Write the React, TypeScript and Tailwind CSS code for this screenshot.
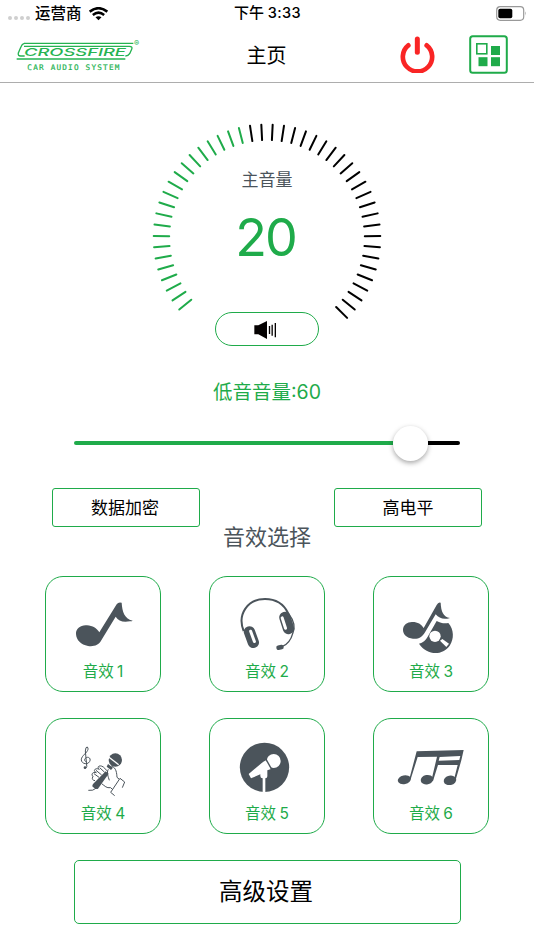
import type { ReactNode } from "react";

const GREEN = "#1fab4a";
const SLATE = "#4b545b";

// 48 steps over 270 degrees, the first step (zero) has no tick
const TICK_COUNT = 47;
const VOLUME_TICKS = 21;

type Effect = {
  label: string;
  icon: ReactNode;
};

function StatusBar() {
  return (
    <div className="grid h-[27px] grid-cols-3 items-center pl-2 pr-[7px] text-[14.5px] font-medium">
      <div className="flex items-center">
        <div className="mt-[9px] flex gap-[2px]">
          {[0, 1, 2, 3].map((dot) => (
            <span key={dot} className="h-1 w-1 rounded-full bg-[#cfcfcf]" />
          ))}
        </div>
        <span className="ml-[5px] text-[15.5px]">运营商</span>
        <svg className="ml-[7px] h-[14px] w-[19px]" viewBox="0 0 57 42" fill="none" stroke="#000" strokeWidth="7.500">
          <path d="M2 14 Q28.5 -7 55 14" />
          <path d="M11.500 24 Q28.500 10 45.500 24" />
          <path d="M19.500 31 Q28.500 24 37.500 31 L28.500 40 Z" fill="#000" stroke="none" />
        </svg>
      </div>
      <div className="whitespace-nowrap text-center">
        <span className="text-[15px]">下午</span> <span className="tracking-[0.4px]">3:33</span>
      </div>
      <div className="flex justify-end">
        <svg className="h-[15px] w-[31px]" viewBox="0 0 31 15">
          <rect x="0.700" y="0.700" width="27" height="13.600" rx="3.500" fill="none" stroke="#999" strokeWidth="1.200" />
          <rect x="2.300" y="2.700" width="14" height="9.600" rx="1.800" fill="#000" />
          <path d="M29.300 5.300 Q31 7.500 29.300 9.700 Z" fill="#999" />
        </svg>
      </div>
    </div>
  );
}

function Logo() {
  return (
    <svg className="h-[36px] w-[130px] overflow-visible" viewBox="0 0 390 108" fill="none" stroke="#25b351" strokeWidth="4">
      <path d="M24 19 H352" />
      <path d="M24 28 H340 Q351 28 347 37 L341 50 Q337 57 328 57" />
      <path d="M25 19 Q18 21 15 29 L7 48 Q5 57 14 57 H26 M2 66 H328" />
      <text x="24" y="56" fontSize="33" fontStyle="italic" fontWeight="500" textLength="306" lengthAdjust="spacingAndGlyphs" fill="#25b351" stroke="none" fontFamily="Inter, sans-serif">
        CROSSFIRE
      </text>
      <text x="34" y="99" fontSize="23" textLength="276" fill="#25b351" stroke="#25b351" strokeWidth="0.600" fontFamily="'DejaVu Sans Mono', monospace">
        CAR AUDIO SYSTEM
      </text>
      <text x="354" y="28" fontSize="23" fill="#25b351" stroke="none" fontFamily="Inter, sans-serif">
        ®
      </text>
    </svg>
  );
}

function Header() {
  return (
    <header className="grid h-[56px] grid-cols-[1fr_auto_1fr] items-center border-b border-[#adadad] pl-4 pr-[26px]">
      <Logo />
      <h1 className="pl-[9px] pt-[2px] text-[20px]">主页</h1>
      <div className="flex items-center justify-end gap-[34px]">
        <svg className="h-[37px] w-[35px]" viewBox="0 0 105 111" fill="none" stroke="#f92525" strokeLinecap="round">
          <path d="M25 28 A44 44 0 1 0 80 28" strokeWidth="14" />
          <path d="M52 9 V49" strokeWidth="15" />
        </svg>
        <svg className="h-[39px] w-[39px]" viewBox="0 0 39 39">
          <rect x="1.200" y="1.200" width="36.600" height="36.600" rx="2.500" fill="none" stroke={GREEN} strokeWidth="2" />
          <rect x="7.800" y="8.800" width="10" height="10" fill="none" stroke={GREEN} strokeWidth="1.600" />
          <rect x="22" y="11" width="9" height="9" fill={GREEN} />
          <rect x="9.500" y="22.200" width="9" height="9" fill={GREEN} />
          <rect x="22" y="22.200" width="9" height="9" fill={GREEN} />
        </svg>
      </div>
    </header>
  );
}

function VolumeDial() {
  const ticks = Array.from({ length: TICK_COUNT }, (_, i) => i + 1);

  return (
    <section className="mt-[37px] grid h-[229px] w-[230px] justify-items-center">
      <svg className="col-start-1 row-start-1 h-[229px] w-[230px]" viewBox="0 0 230 229">
        {ticks.map((tick) => (
          <line
            key={tick}
            x1="115"
            y1="4.500"
            x2="115"
            y2="20"
            stroke={tick <= VOLUME_TICKS ? GREEN : "#000"}
            strokeWidth="2"
            strokeLinecap="round"
            transform={`rotate(${-135 + (tick * 270) / TICK_COUNT} 115 117.8)`}
          />
        ))}
      </svg>
      <div className="col-start-1 row-start-1 flex flex-col items-center">
        <span className="mt-[48px] text-[17px] leading-6 text-[#4b545b]">主音量</span>
        <span className="mr-[3px] mt-[17px] text-[52px] leading-[58px] tracking-[-2px] text-[#1fab4a]">20</span>
        <button className="mt-[45px] flex h-[34px] w-[104px] items-center justify-center rounded-full border border-[#1fab4a]">
          <svg className="mr-1 mt-px h-[18px] w-[23px]" viewBox="0 0 69 54">
            <path d="M1 13 H13 L39 0 V54 L13 40 H1 Z" fill="#050202" />
            <path d="M46.500 15 V39 M54.500 11 V44 M64 6 V49" stroke="#050202" strokeWidth="4" />
          </svg>
        </button>
      </div>
    </section>
  );
}

function BassSlider() {
  return (
    <section className="flex w-full flex-col items-center">
      <p className="mt-[30px] text-[19.500px] leading-[26px] text-[#1fab4a]">低音音量:60</p>
      <div className="mt-[20px] flex h-9 w-[386px] items-center">
        <div className="h-1 w-[319px] rounded-l-full bg-[#1fab4a]" />
        <div className="h-[35px] w-[35px] shrink-0 rounded-full bg-white shadow-[0_2px_5px_rgba(0,0,0,0.35)]" />
        <div className="h-1 flex-1 rounded-r-full bg-black" />
      </div>
    </section>
  );
}

const effects: Effect[] = [
  {
    label: "音效 1",
    icon: (
      <path d="M120 201 C119 184 135 173 153 175 C170 176 182 184 190 196 L242 112 Q247 104 257 107 C259 133 264 154 290 161 Q289 163 282 163 C260 167 248 162 239 149 L196 220 C188 235 172 240 156 237 C135 233 121 220 120 201 Z" />
    ),
  },
  {
    label: "音效 2",
    icon: (
      <>
        <path d="M131 192 C111 143 142 96 195 96 C234 96 252 113 264 138 L276 174" fill="none" stroke={SLATE} strokeWidth="6" />
        <rect x="137" y="177" width="34" height="67" rx="16" transform="rotate(-20 154 210)" />
        <rect x="153" y="187" width="9" height="42" rx="4.500" fill="#fff" transform="rotate(-20 158 208)" />
        <rect x="243" y="134" width="34" height="68" rx="16" transform="rotate(-18 260 168)" />
        <rect x="247" y="147" width="9" height="42" rx="4.500" fill="#fff" transform="rotate(-18 252 168)" />
        <path d="M266 140 C284 164 286 184 278 200 Q270 230 246 239" fill="none" stroke={SLATE} strokeWidth="4" />
        <rect x="229" y="234" width="22" height="14" rx="6" transform="rotate(-12 240 241)" />
      </>
    ),
  },
  {
    label: "音效 3",
    icon: (
      <>
        <path d="M117 189 C117 172 132 164 146 165 C161 165 172 172 179 183 L218 114 Q223 104 230 107 C231 133 238 150 258 153 C238 159 226 154 215 142 L184 194 C174 211 162 217 147 215 C128 213 117 202 117 189 Z" />
        <path d="M218 162 C232 170 243 170 253 168 C270 188 271 215 257 236 C234 267 190 266 165 230 C177 228 185 219 191 209 L218 162 Z" />
        <circle cx="213" cy="208" r="17" fill="#fff" />
        <path d="M235 216 L255 230 L247 240 L228 221 Z" fill="#fff" />
      </>
    ),
  },
  {
    label: "音效 4",
    icon: (
      <>
        <g fill="none" stroke={SLATE} strokeWidth="3">
          <path d="M146 176 Q154 179 152 168 L148 126 Q149 112 154 114 C162 123 146 134 140 142 C128 157 145 169 157 162 C170 151 157 139 148 148 C142 155 150 159 151 157" />
          <path d="M172 204 C163 195 171 188 181 191 C168 184 180 175 190 181 C180 172 193 167 202 174 L216 188 M174 194 L189 205 M180 184 L197 198 M191 176 L206 190" />
          <path d="M170 204 Q166 213 177 215 M225 170 C242 176 242 194 243 205 L249 210 M197 224 C207 231 211 238 224 236 L230 242" />
          <path d="M217 181 C211 191 217 204 220 214" />
          <path d="M236 260 L224 250 L252 208 L266 219 L259 236" />
          <path d="M183 236 Q170 247 157 244" />
        </g>
        <circle cx="147" cy="176" r="4" />
        <circle cx="238" cy="153" r="20" />
        <path d="M218 144 L248 167" stroke="#fff" strokeWidth="4" />
        <path d="M216 165 L231 176 L225 183 L212 173 Z" />
        <path d="M209 187 L218 194 L186 239 Q180 243 170 233 Q167 229 174 222 Z" />
      </>
    ),
  },
  {
    label: "音效 5",
    icon: (
      <>
        <circle cx="193.500" cy="175" r="74" />
        <g fill="#fff">
          <circle cx="221" cy="156" r="21" />
          <path d="M190 158 L198 154 L213 180 L202 184 V202 Q202 208 196 208 V249 H188 V208 Q181 208 181 201 V196 L153 208 L146 195 Z" />
        </g>
        <path d="M197 149 L215 181" stroke={SLATE} strokeWidth="4" />
      </>
    ),
  },
  {
    label: "音效 6",
    icon: (
      <>
        <path d="M158 127 L299 123 L292 154 L274 216 L269 215 L281 168 H222 L207 216 L202 215 L219 143 L161 144 L140 211 L136 210 Z" />
        <path d="M227 144 L289 141 L286 153 L224 155 Z" fill="#fff" />
        <ellipse cx="121" cy="212" rx="20" ry="13" transform="rotate(-12 121 212)" />
        <ellipse cx="189" cy="212" rx="19" ry="14" transform="rotate(-12 189 212)" />
        <ellipse cx="258" cy="214" rx="19" ry="14" transform="rotate(-12 258 214)" />
      </>
    ),
  },
];

function EffectCard({ label, icon }: Effect) {
  return (
    <button className="flex h-[116px] flex-col items-center rounded-[18px] border border-[#1fab4a]">
      <svg className="h-[82px] w-[114px]" viewBox="30 30 342 246" fill={SLATE}>
        {icon}
      </svg>
      <span className="pt-px text-[15.500px] leading-[24px] text-[#1fab4a] [word-spacing:-1px]">{label}</span>
    </button>
  );
}

function App() {
  return (
    <main className="flex h-[950px] w-[534px] flex-col overflow-hidden bg-white font-[Inter,'Noto_Sans_CJK_SC',sans-serif] text-black">
      <StatusBar />
      <Header />
      <div className="flex flex-col items-center">
        <VolumeDial />
        <BassSlider />

        <div className="mt-[27px] flex w-[430px] justify-between">
          <button className="h-[39px] w-[148px] rounded-[3px] border border-[#1fab4a] pr-[2px] pt-[2px] text-[17px]">数据加密</button>
          <button className="h-[39px] w-[148px] rounded-[3px] border border-[#1fab4a] pt-[2px] text-[17px]">高电平</button>
        </div>

        <h2 className="-mt-[5px] text-[22px] leading-[30px] text-[#4b545b]">音效选择</h2>
        <div className="mt-[24px] grid w-[444px] grid-cols-3 gap-x-12 gap-y-[26px]">
          {effects.map((effect) => (
            <EffectCard key={effect.label} {...effect} />
          ))}
        </div>

        <button className="mt-[26px] h-[64px] w-[387px] rounded-[5px] border border-[#1fab4a] pr-[2px] text-[23.500px]">高级设置</button>
      </div>
    </main>
  );
}

export default App;
